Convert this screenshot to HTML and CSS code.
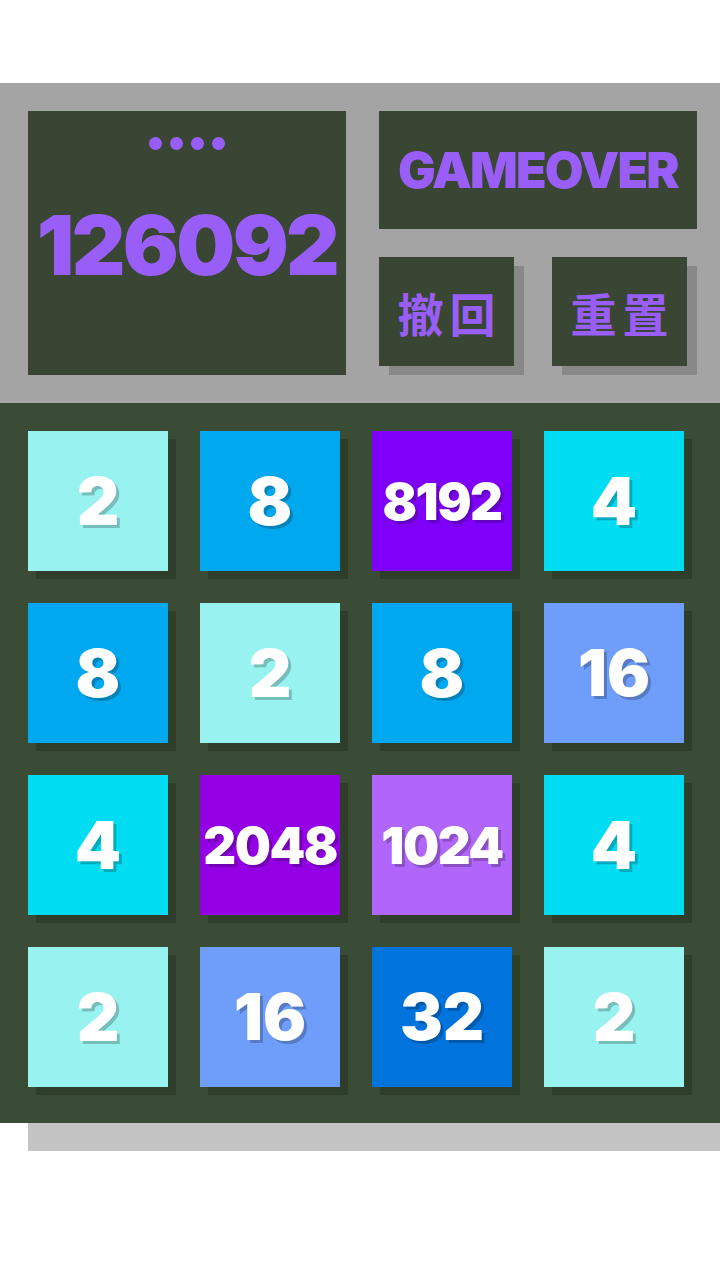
FILE: index.html
```html
<!DOCTYPE html>
<html lang="zh">
<head>
<meta charset="utf-8">
<title>2048</title>
<link rel="stylesheet" href="styles.css">
</head>
<body>
<div class="page">
  <div class="top-space"></div>
  <section class="panel">
    <div class="score-box">
      <div class="dots"><span></span><span></span><span></span><span></span></div>
      <div class="score">126092</div>
    </div>
    <div class="side">
      <div class="status">GAMEOVER</div>
      <div class="buttons">
        <div class="btn">撤回</div>
        <div class="btn">重置</div>
      </div>
    </div>
  </section>
  <section class="board">
    <div class="tile t2"><span>2</span></div>
    <div class="tile t8"><span>8</span></div>
    <div class="tile t8192 four"><span>8192</span></div>
    <div class="tile t4"><span>4</span></div>

    <div class="tile t8"><span>8</span></div>
    <div class="tile t2"><span>2</span></div>
    <div class="tile t8"><span>8</span></div>
    <div class="tile t16 two"><span>16</span></div>

    <div class="tile t4"><span>4</span></div>
    <div class="tile t2048 four"><span>2048</span></div>
    <div class="tile t1024 four"><span>1024</span></div>
    <div class="tile t4"><span>4</span></div>

    <div class="tile t2"><span>2</span></div>
    <div class="tile t16 two"><span>16</span></div>
    <div class="tile t32 two"><span>32</span></div>
    <div class="tile t2"><span>2</span></div>
  </section>
  <div class="base-bar"></div>
</div>
</body>
</html>
```

FILE: styles.css
```css
* { box-sizing: border-box; }

body {
  margin: 0;
  background: #ffffff;
  font-family: Inter, "Noto Sans", "Noto Sans CJK SC", sans-serif;
}

.page {
  width: 720px;
}

.top-space {
  height: 83px;
}

.panel {
  background: #a4a4a4;
  height: 320px;
  padding: 28px 23px 28px 28px;
  display: grid;
  grid-template-columns: 318px 318px;
  column-gap: 33px;
}

.score-box {
  background: #3a4634;
  height: 264px;
  position: relative;
  display: flex;
  align-items: center;
  justify-content: center;
}

.dots {
  position: absolute;
  top: 26px;
  left: 0;
  right: 0;
  display: flex;
  justify-content: center;
  gap: 8px;
}

.dots span {
  width: 13px;
  height: 13px;
  border-radius: 50%;
  background: #9a5ef8;
}

.score {
  color: #9a5ef8;
  font-weight: 900;
  font-size: 83px;
  letter-spacing: -2.6px;
  line-height: 1;
  margin-top: 4px;
}

.side {
  display: flex;
  flex-direction: column;
  gap: 28px;
}

.status {
  background: #3a4634;
  height: 118px;
  display: flex;
  align-items: center;
  justify-content: center;
  color: #9a5ef8;
  font-weight: 900;
  font-size: 50px;
  letter-spacing: -1.8px;
}

.buttons {
  display: flex;
  gap: 38px;
}

.btn {
  width: 135px;
  height: 109px;
  background: #3a4634;
  box-shadow: 10px 9px 0 #888888;
  display: flex;
  align-items: center;
  justify-content: center;
  color: #9a5ef8;
  font-family: "Noto Sans CJK SC", sans-serif;
  font-weight: 700;
  font-size: 46px;
  letter-spacing: 6px;
  padding-left: 6px;
}

.board {
  background: #3a4c35;
  padding: 28px 36px 36px 28px;
  display: grid;
  grid-template-columns: repeat(4, 140px);
  grid-auto-rows: 140px;
  gap: 32px;
}

.tile {
  box-shadow: 8px 8px 0 #2f3d2b;
  display: flex;
  align-items: center;
  justify-content: center;
  color: #ffffff;
  font-weight: 900;
  font-size: 66px;
  line-height: 1;
  text-shadow: 3px 3px 0 rgba(0, 0, 0, 0.22);
}

.tile.two { font-size: 64px; letter-spacing: 0; }
.tile.four { font-size: 51px; letter-spacing: -1.5px; }

.t2 { background: #98f2f0; }
.t4 { background: #00dcf2; }
.t8 { background: #00a8f0; }
.t16 { background: #6f9dfa; }
.t32 { background: #0074dc; }
.t1024 { background: #b066fa; }
.t2048 { background: #9400e6; }
.t8192 { background: #7f00f8; }

.base-bar {
  margin-left: 28px;
  height: 28px;
  background: #c4c4c4;
}
```
